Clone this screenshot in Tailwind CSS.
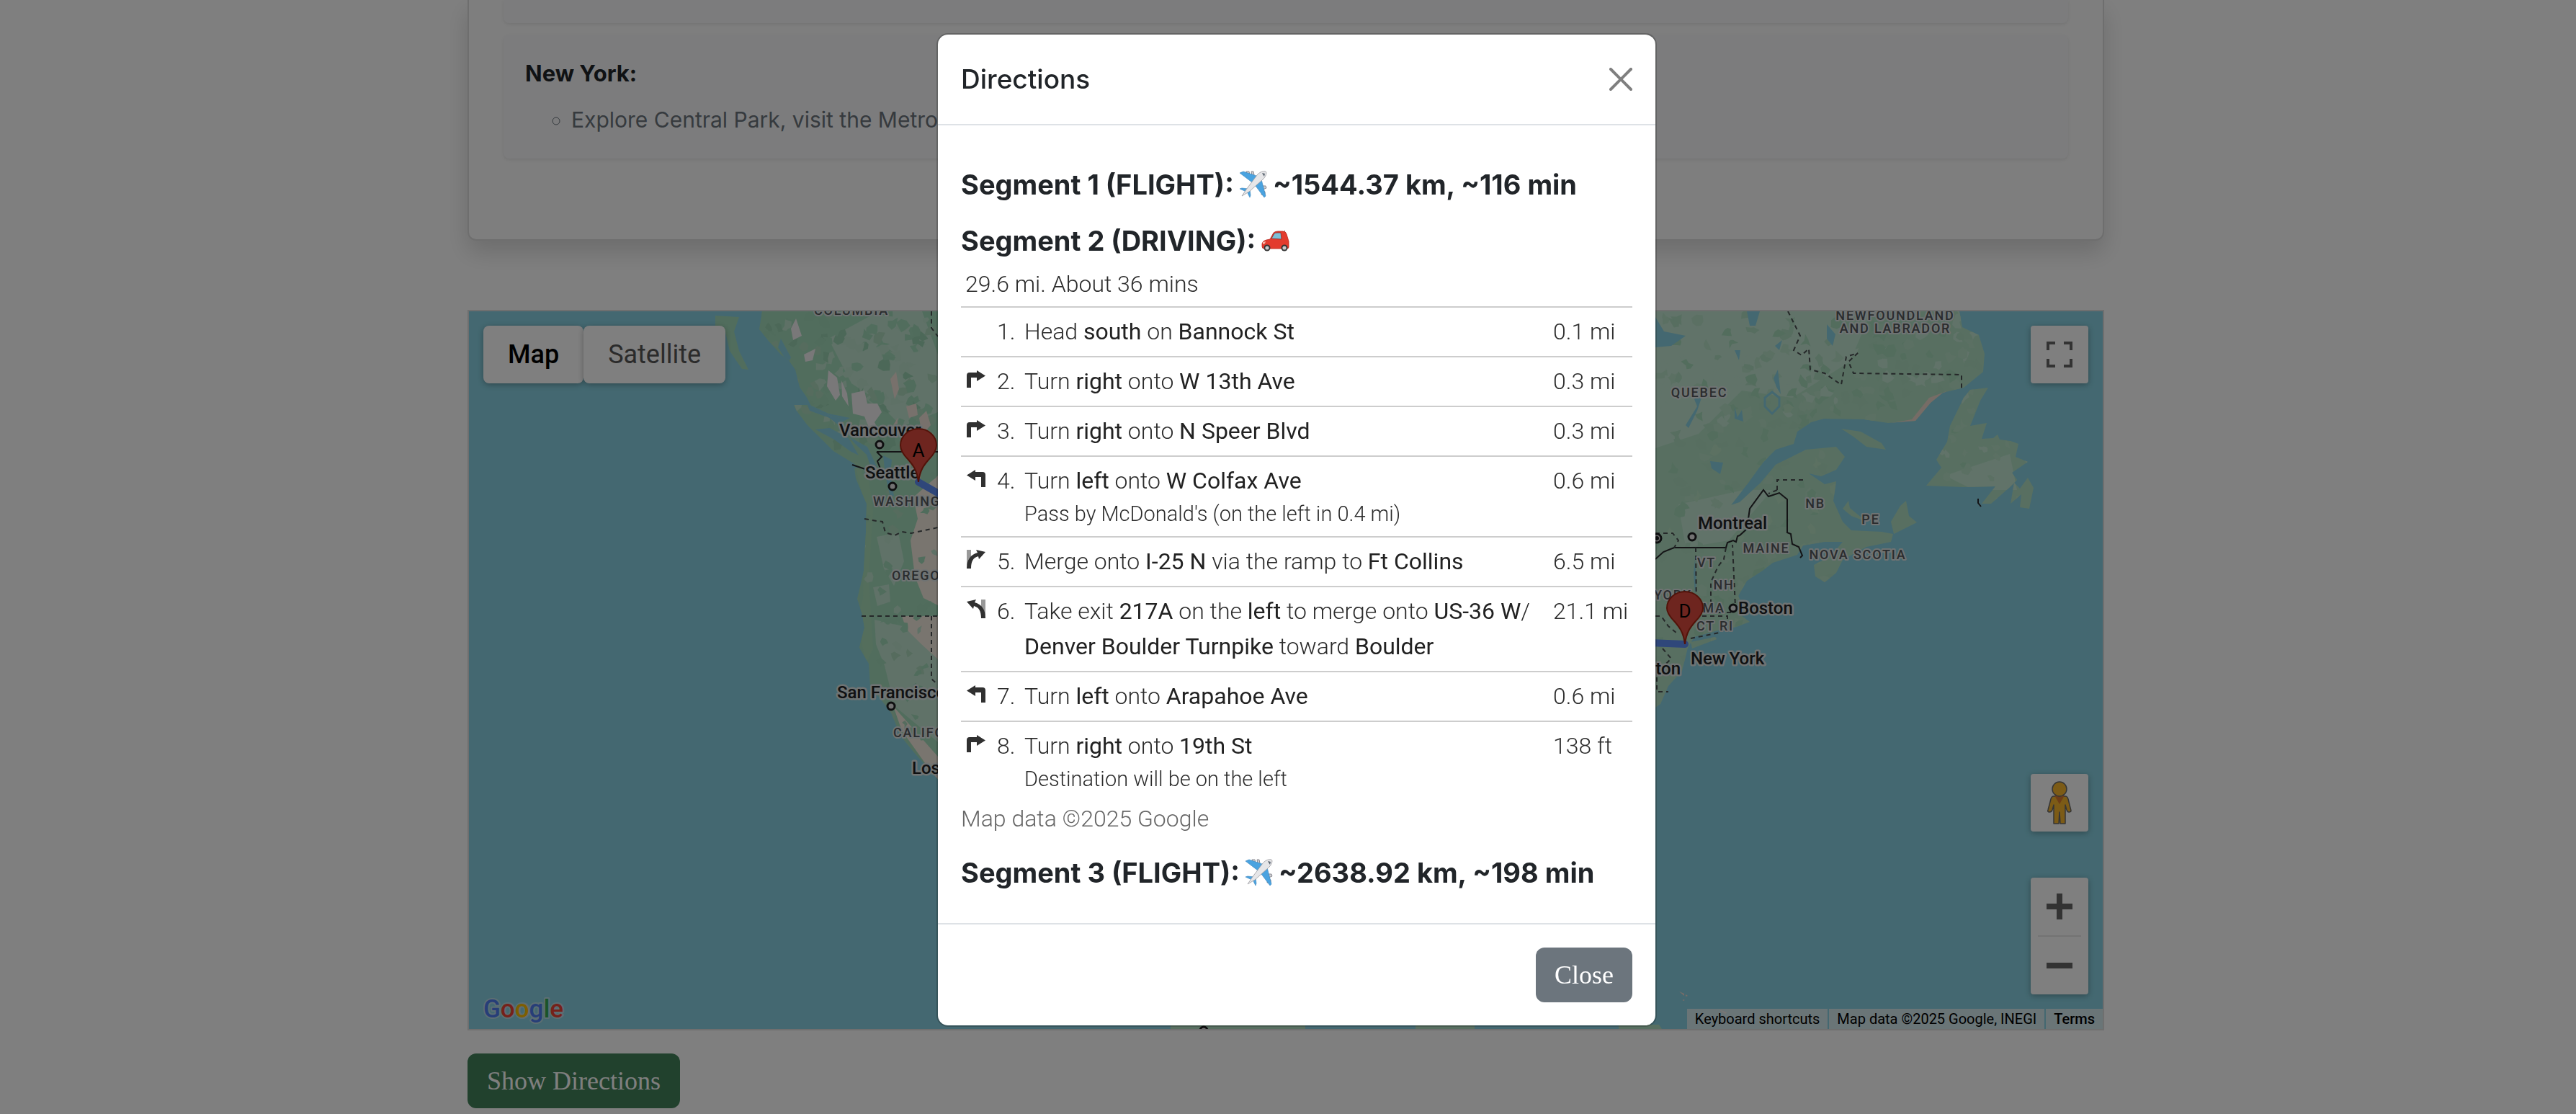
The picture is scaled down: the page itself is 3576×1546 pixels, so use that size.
<!DOCTYPE html>
<html lang="en">
<head>
  <meta charset="UTF-8" />
  <meta name="viewport" content="width=device-width, initial-scale=1.0" />
  <title>Trip Planner - Directions</title>
  <script src="https://cdn.jsdelivr.net/npm/@tailwindcss/browser@4"></script>
</head>
<body class="bg-white h-screen overflow-hidden font-['Inter',sans-serif] text-[#212529]">

  <!-- shared symbols -->
  <svg class="hidden" aria-hidden="true">
    <symbol id="turn-right" viewBox="0 0 26 24">
      <path fill="#303030" d="M0 24V7q0-4 4-4h10V0l12 7.5L14 15v-5H6v14z" />
    </symbol>
    <symbol id="turn-left" viewBox="0 0 26 24">
      <path fill="#303030" d="M26 24V7q0-4-4-4H12V0L0 7.5 12 15v-5h8v14z" />
    </symbol>
    <symbol id="merge-right" viewBox="0 0 26 26">
      <path fill="#999" d="M0 0h6v14l-6 8z" />
      <path fill="#303030" d="M0 26C0 14 5 7 15 4L13 0l13 3-9 10-1-4C9 11 6 16 6 26z" />
    </symbol>
    <symbol id="exit-left" viewBox="0 0 26 26">
      <path fill="#999" d="M26 0h-6v14l6 8z" />
      <path fill="#303030" d="M26 26C26 14 21 7 11 4l2-4L0 3l9 10 1-4c7 2 10 7 10 17z" />
    </symbol>
    <symbol id="plane" viewBox="0 0 38 38">
      <path fill="#cfcfd3" stroke="#8a8a90" d="M9 1l4 0 1 5-4 1zM16 1l3 0 1 5-3 1zM32 21l4 0 1 3-5 2zM31 28l4 1 0 4-5 0z" />
      <path fill="#4aa3e0" stroke="#3a83bb" stroke-width=".6" d="M0 3l5-2 21 7-9 8zM36 35l-2 2-12-16 8-9z" />
      <path fill="#4aa3e0" stroke="#3a83bb" stroke-width=".6" d="M0 25l3-1 9 1-3 4zM14 37l1-3-1-8-4 3z" />
      <path fill="#e6e6e8" stroke="#9a9aa0" stroke-width=".8" d="M3 35l6-9L24 6C28 1 34 0 36 1s1 7-5 12L13 29z" />
      <path fill="#5b6570" d="M31 3l4 1-1 4-2-3z" />
    </symbol>
    <symbol id="car" viewBox="0 0 39 30">
      <path stroke="#555" stroke-width="1" d="M31 3l2-2" />
      <path fill="#e33b2e" stroke="#b8251b" stroke-width=".8" d="M1 19q1-4 6-5l5-1 5-9q2-2 6-2h7q4 0 5 4l3 10v8q0 2-3 2H4q-3 0-3-3z" />
      <path fill="#7cc0d8" stroke="#8e2a22" stroke-width=".8" d="M14 12l4-7q1-1 4-1h5l1 9z" />
      <path fill="#f6b9a8" d="M2 17l4-1-1 3-3 1z" />
      <circle cx="8" cy="25" r="4.5" fill="#333" /><circle cx="8" cy="25" r="2.6" fill="#c9c9cc" />
      <circle cx="32" cy="25" r="4.5" fill="#333" /><circle cx="32" cy="25" r="2.6" fill="#c9c9cc" />
    </symbol>
  </svg>

  <div class="pr-[6px]">
    <main class="mx-auto max-w-[2272px]">

      <!-- itinerary -->
      <section class="border-2 border-t-0 border-[#dcdcdc] rounded-b-xl bg-[#fcfcfc] px-12 pb-28 shadow-[0_16px_32px_rgba(0,0,0,0.15)]">
        <ul class="flex flex-col gap-4">
          <li class="h-8 bg-[#f8f9fb] rounded-b-lg shadow-[0_2px_4px_rgba(0,0,0,0.08)]"></li>
          <li class="bg-[#f8f9fb] rounded-lg px-[30px] py-[30px] shadow-[0_2px_4px_rgba(0,0,0,0.08)]">
            <strong class="block text-[31px] leading-[48px]">New York:</strong>
            <ul class="list-[circle] mt-4 pl-16 text-[30px] leading-[48px] text-[#6c757d]">
              <li>Explore Central Park, visit the Metropolitan Museum of Art.</li>
            </ul>
          </li>
        </ul>
      </section>

      <!-- map -->
      <section class="relative mt-24 h-[1000px] border-2 border-[#dedede] bg-[#88d1e2] overflow-hidden font-['Roboto',sans-serif]">
        <svg class="block w-full h-full" viewBox="651 432 2268 996" preserveAspectRatio="xMidYMid slice" role="img" aria-label="Route map">
          <defs>
            <clipPath id="west">
              <path d="M1058 432l-4 25 13 16 17 19 11 8 9 13 6 24 9 13 7 13 26 14 15 3 13 27 24 13 13 27-3 13-15-11-13 0 2 15 9 21 6 14-1 40-3 53-4 18-5 21 7 22 3 18-7 28 13 22 2 32 15 18 14 18 13 32 17 21 40 45V432z" />
              <path d="M1102 562l18 0 23 12 24 18 18 22 18 17 5 15-8 7-20-13-23-14-20-20-17-17-15-20z" />
              <path d="M993 438l33 2-7 20 7 27 13 26-9-1-17-25-7-30-13-5z" />
            </clipPath>
            <clipPath id="east">
              <path d="M2298 432H2720l4 22 23 11 8 26-2 25-27 22-29 7-17 14-21 25-38 3-34-5-55-1-18 5-19 13-5 17-25 8-17 17-21 29-24 31 12-4 29-27 21-25 42-21 42-4 12 14-12 18-21 9-17-4 22 15 16-4-4 27 13 29 12 12 42 2 16 3-3 11-34 7-33 18-9 18-16 13-13-8-2-16 23-12 17-20-25 0-30 5-8 13-34 11-13 10-23 15-12 21 6 14-2 13 12 9-19 7-25 5-33 9-9 15-8 32-19 21-11 25-7 5z" />
              <path d="M2347 891l34-7 2 3-34 13z" />
              <path d="M2556 595l27 4 29 16 6 9-27-4-18-14z" />
              <path d="M2735 541l25-3-11 18-14 35 23-4-7 22 16-1 6-5 3 7 15 2 11 4-4 18 17 7-22 15 7 10-11 11-25 22-13 0 19-24-44 1-52-2 21-25-7-11 15-25 4-22 19-39z" />
              <path d="M2796 670l8 8 11-15 8 14-6 29-13-2 2-18-15 13z" />
              <path d="M2558 706l8-11 2 10 23 19-21-8z" />
              <path d="M2646 695l4 21 11 9-32 16-4-17 13-22z" />
            </clipPath>
          </defs>

          <g clip-path="url(#west)">
            <rect x="980" y="432" width="330" height="700" fill="#a3dbbb" />
            <path fill="#c0e4d0" d="M1150 470l70-38h60l22 60v80l-50 20-40-40-30-20zM1217 745l30-6 8 40-14 34-14-24zM1212 815l22-4 2 24-18 6zM1214 860l88 20v150l-60-50-14-56-12-30z" />
            <path fill="#f2eade" d="M1268 690l34-30v180l-20-10-12-30-6-50 10-30zM1252 855l50 0v60l-24-22-20-20zM1240 980l62 70v34l-50-70z" />
            <path fill="#a8dcb8" d="M1186 640l14 60-2 130-8 30 12 60 10-20-6-100 6-90-8-60z" />
            <g id="west-patches"></g>
            <path fill="#f3f0f2" d="M1105 442l8 24-12 6-3-16zM1116 492l16-8-4 16-10 2zM1150 514l12 10 4 24-6 8-12-20zM1168 528l8 18 2 18-9-14zM1182 546l18-4 4 18 14 0 6 12-10 14 8 16-14-4-8-20-16-4z" />
            <path fill="#f0e2d8" d="M1236 526l8-10 4 24-6 14zM1258 564l14-4 2 16-12 4zM1276 580l10-10 6 20-12 14zM1246 580l-6 10 6-2z" />
            <path fill="#88d1e2" d="M1132 596l20-2 26 14 14 24-12-6-22-16zM1084 470l14 26-4 8-14-22zM1226 632l12 6-2 20 5 30-5 2-7-30zM1120 560l30 14 30 6-12 6-44-16z" />
          </g>

          <g clip-path="url(#east)">
            <rect x="2290" y="432" width="560" height="560" fill="#b0dfc2" />
            <path fill="#c2e6d2" d="M2298 432h300l-30 70-80 50-70-10-60 60-60 20zM2700 660l90-30 10 50-60 0zM2330 700l90-20 40 0-60 70-60 10z" />
            <g id="east-patches"></g>
            <path fill="#ecd8cc" d="M2702 543l-18 15-24 28-40 2 34-6 24-30z" />
            <path fill="#88d1e2" d="M2298 440l12 20 30 6-20 14-22 2zM2425 432h18l-6 20-8 0zM2340 590l16-26-4-10 14-14-10 30-12 24zM2408 565l4 14 6-10 2 16-12-4zM2374 640l18 2-4 16-12-8zM2462 525l6-12 4 34-6-10zM2536 450l12 14-4 16-8-10zM2464 480l10-8-4 14zM2408 486h8l-2 14zM2353 775l2 34-2 16-2-30z" />
            <path fill="none" stroke="#88d1e2" stroke-width="3" d="M2450 552l10-8 10 8 0 12-10 10-10-10z" />
          </g>

          <!-- southern edge -->
          <path fill="#b0dfc2" d="M1625 1422h187v6h-187zM1965 1422h82v6h-82zM2247 1422h56l4 6h-60z" />
          <path fill="#f0d9cf" d="M2331 1376l7 3 0 3zM2340 1380l3 2-3 1zM2336 1387l3 1-3 1zM2386 1401l11 4-2 2z" />

          <!-- borders -->
          <g fill="none" stroke="#28282c" stroke-width="2">
            <path d="M1217 627H1310M1217 627l7 7-6 6 4 10M1183 645l18 6" />
            <path d="M2298 776l11-10 15-6h72l2-7 8-3 4 2 2-8 3-1 10-9 4-28 19-26 7 9 15-5 11 9v46l5 2 2 14 9 4 5 12-3 3M2746 692v6l4 5" />
            <g stroke="#4a5052" stroke-dasharray="6 5">
              <path d="M1200 720l17 3 8 1 4 15 13 4 10-5 13 2 37-8M1196 855h110M1293 855v87l9 8M1293 432v23l9 12" />
              <path d="M2482 432l17 34-9 20 11 7 10-9 2 29 20 5 23 16 7-39 16-5-13 12 7 16 150 2v22M2354 760l1 90h50l4-8-4-86M2396 760l-3 16-8 10-10 22v42M2298 855h8l10 14 12 10M2330 855h68l0 12M2347 886l40-8M2467 680v-14h40M2467 680l-12 5M2298 740l24 0 8 10-6 10" />
              <path d="M2300 940v20h16M2308 900l12 14-14 14" />
            </g>
          </g>

          <!-- cities -->
          <g fill="#e6e6e6" stroke="#1d1f20" stroke-width="3">
            <circle cx="1221" cy="617" r="5" /><circle cx="1239" cy="675" r="5" /><circle cx="1237" cy="980" r="5" />
            <circle cx="2349" cy="745" r="5" /><circle cx="2406" cy="844" r="5" /><circle cx="2300" cy="747" r="6" />
            <circle cx="1671" cy="1430" r="5" />
          </g>
          <circle cx="2300" cy="747" r="3" fill="#1d1f20" />

          <g class="[paint-order:stroke] text-[24px] font-medium" fill="#202224" stroke="#dfe6e6" stroke-width="5" stroke-linejoin="round">
            <text x="1165" y="605">Vancouver</text>
            <text x="1201" y="664">Seattle</text>
            <text x="1162" y="969">San Francisco</text>
            <text x="1266" y="1074">Los Angeles</text>
            <text x="2357" y="734">Montreal</text>
            <text x="2413" y="852">Boston</text>
            <text x="2347" y="922">New York</text>
            <text x="2333" y="936" text-anchor="end">Washington</text>
          </g>
          <g class="[paint-order:stroke] text-[18px] font-medium tracking-widest" fill="#54595c" stroke="#dfe6e6" stroke-width="4" stroke-linejoin="round">
            <text x="1130" y="437">COLUMBIA</text>
            <text x="1212" y="702">WASHINGTON</text>
            <text x="1238" y="805">OREGON</text>
            <text x="1240" y="1023">CALIFORNIA</text>
            <text x="2631" y="444" text-anchor="middle">NEWFOUNDLAND</text>
            <text x="2631" y="462" text-anchor="middle">AND LABRADOR</text>
            <text x="2359" y="551" text-anchor="middle">QUEBEC</text>
            <text x="2520" y="705" text-anchor="middle">NB</text>
            <text x="2597" y="727" text-anchor="middle">PE</text>
            <text x="2452" y="767" text-anchor="middle">MAINE</text>
            <text x="2579" y="776" text-anchor="middle">NOVA SCOTIA</text>
            <text x="2369" y="787" text-anchor="middle">VT</text>
            <text x="2393" y="818" text-anchor="middle">NH</text>
            <text x="2379" y="850" text-anchor="middle">MA</text>
            <text x="2381" y="875" text-anchor="middle">CT RI</text>
            <text x="2349" y="832" text-anchor="end">NEW YORK</text>
          </g>

          <!-- route and pins -->
          <path fill="none" stroke="#5f8ef5" stroke-width="10" stroke-linecap="round" d="M1275 669l60 34M2290 892l49 2" />
          <g id="pins" class="text-[26px]" text-anchor="middle">
            <g>
              <path fill="#dd4b3e" stroke="#a52714" stroke-width="2" d="M1275 669c-2-17-8-24-14-31-6-6-11-13-11-20a25 23 0 0 1 50 0c0 7-5 14-11 20-6 7-12 14-14 31z" />
              <text x="1275" y="634">A</text>
            </g>
            <g>
              <path fill="#dd4b3e" stroke="#a52714" stroke-width="2" d="M2339 894c-2-17-8-24-14-31-6-6-11-12-11-19a25 23 0 0 1 50 0c0 7-5 13-11 19-6 7-12 14-14 31z" />
              <text x="2339" y="857">D</text>
            </g>
          </g>
        </svg>

        <div class="absolute top-5 left-5 flex h-20 text-[36px]">
          <button class="bg-white rounded-lg px-[34px] font-medium text-black shadow-[0_2px_8px_rgba(0,0,0,0.3)]">Map</button>
          <button class="bg-white rounded-lg px-[34px] text-[#565656] shadow-[0_2px_8px_rgba(0,0,0,0.3)]">Satellite</button>
        </div>

        <button class="absolute top-5 right-5 size-20 flex items-center justify-center bg-white rounded shadow-[0_2px_8px_rgba(0,0,0,0.3)]" aria-label="Toggle fullscreen view">
          <svg class="size-9" viewBox="0 0 18 18" fill="#666"><path d="M0 0v6h2V2h4V0zM12 0v2h4v4h2V0zM16 16h-4v2h6v-6h-2zM2 12H0v6h6v-2H2z" /></svg>
        </button>

        <div class="absolute bottom-12 right-5 flex flex-col gap-16">
          <button class="size-20 flex items-center justify-center bg-white rounded shadow-[0_2px_8px_rgba(0,0,0,0.3)]" aria-label="Street View Pegman">
            <svg class="w-[34px] h-[60px]" viewBox="0 0 34 60" stroke="#6b6b6b" stroke-width="1.5" stroke-linejoin="round">
              <path fill="#f9b62d" d="M9 21h16q3 0 4 4l4 16q0 2-3 2-2 0-3-3l-2-7v26h-7l-1-16-1 16H9V33l-2 7q-1 3-4 3-3 0-2-3l4-15q1-4 4-4z" />
              <path fill="#dc7a2e" stroke="none" d="M10 20h14l-7 12z" />
              <circle cx="17" cy="11" r="10" fill="#f9b62d" />
            </svg>
          </button>
          <div class="flex flex-col items-center bg-white rounded shadow-[0_2px_8px_rgba(0,0,0,0.3)]">
            <button class="size-20 flex items-center justify-center" aria-label="Zoom in">
              <svg class="size-9" viewBox="0 0 18 18" fill="#666"><path d="M18 7h-7V0H7v7H0v4h7v7h4v-7h7z" /></svg>
            </button>
            <div class="w-[60px] h-[2px] bg-[#e6e6e6]"></div>
            <button class="size-20 flex items-center justify-center" aria-label="Zoom out">
              <svg class="size-9" viewBox="0 0 18 18" fill="#666"><path d="M0 7h18v4H0z" /></svg>
            </button>
          </div>
        </div>

        <a href="#" class="absolute bottom-0 left-5" aria-label="Google Maps">
          <svg class="w-[132px] h-[52px] [paint-order:stroke] text-[35px] font-medium" viewBox="0 0 132 52" stroke="#b9dde6" stroke-width="4" stroke-linejoin="round">
            <text x="0" y="36"><tspan fill="#4e7df0">G</tspan><tspan fill="#ea4335">o</tspan><tspan fill="#fbbc05">o</tspan><tspan fill="#4e7df0">g</tspan><tspan fill="#34a853">l</tspan><tspan fill="#ea4335">e</tspan></text>
          </svg>
        </a>

        <div class="absolute bottom-0 right-0 flex gap-[2px] h-7 text-[20px] leading-7 text-black">
          <button class="px-[11px] bg-[#f5f5f5]/70">Keyboard shortcuts</button>
          <span class="px-[11px] bg-[#f5f5f5]/70">Map data ©2025 Google, INEGI</span>
          <a href="#" class="px-[11px] bg-[#f5f5f5]/70 font-medium">Terms</a>
        </div>
      </section>

      <button class="mt-8 h-[76px] px-[27px] rounded-xl bg-[#42825a] text-white font-['Liberation_Serif',serif] text-[36px]">Show Directions</button>
    </main>
  </div>

  <!-- backdrop and modal -->
  <div class="fixed inset-0 bg-black/50"></div>
  <div class="fixed inset-0 pl-6 flex justify-center items-start">
    <div role="dialog" aria-labelledby="modalTitle" class="mt-[46px] w-full max-w-[1000px] bg-white bg-clip-padding border-2 border-black/20 rounded-2xl">

      <div class="flex items-center justify-between h-[126px] px-8 border-b-2 border-[#dee2e6]">
        <h5 id="modalTitle" class="text-[37px] leading-[56px] font-medium">Directions</h5>
        <button aria-label="Close">
          <svg class="size-8" viewBox="0 0 16 16" fill="#7f7f7f"><path d="M.293.293a1 1 0 0 1 1.414 0L8 6.586 14.293.293a1 1 0 1 1 1.414 1.414L9.414 8l6.293 6.293a1 1 0 0 1-1.414 1.414L8 9.414l-6.293 6.293a1 1 0 0 1-1.414-1.414L6.586 8 .293 1.707a1 1 0 0 1 0-1.414z" /></svg>
        </button>
      </div>

      <div class="px-8 pt-[58px] pb-[46px]">
        <h5 class="flex items-center gap-2 text-[38px] leading-[48px] font-bold">
          Segment 1 (FLIGHT):
          <svg class="size-[38px]"><use href="#plane" /></svg>
          ~1544.37 km, ~116 min
        </h5>

        <h5 class="flex items-center gap-2 mt-[30px] text-[38px] leading-[48px] font-bold">
          Segment 2 (DRIVING):
          <svg class="w-[39px] h-[30px]"><use href="#car" /></svg>
        </h5>

        <div class="mt-3 font-['Roboto',sans-serif] font-light text-[32px] leading-[49px] text-[#2c2c2c]">
          <p class="pl-[6px] mb-[6px]">29.6 mi. About 36 mins</p>
          <table class="w-full table-fixed border-collapse [&_b]:font-normal [&_b]:text-[#222] [&_tr]:border-t-2 [&_tr]:border-[#cdcdcd] [&_td]:align-top [&_td]:py-[9px] [&_svg]:w-[26px] [&_svg]:h-[26px] [&_svg]:ml-2 [&_svg]:mt-2">
            <colgroup><col class="w-[50px]" /><col class="w-[38px]" /><col /><col class="w-[110px]" /></colgroup>
            <tbody>
              <tr><td></td><td>1.</td><td>Head <b>south</b> on <b>Bannock St</b></td><td>0.1 mi</td></tr>
              <tr><td><svg><use href="#turn-right" /></svg></td><td>2.</td><td>Turn <b>right</b> onto <b>W 13th Ave</b></td><td>0.3 mi</td></tr>
              <tr><td><svg><use href="#turn-right" /></svg></td><td>3.</td><td>Turn <b>right</b> onto <b>N Speer Blvd</b></td><td>0.3 mi</td></tr>
              <tr><td><svg><use href="#turn-left" /></svg></td><td>4.</td><td>Turn <b>left</b> onto <b>W Colfax Ave</b><div class="text-[29px] leading-[43px]">Pass by McDonald's (on the left in 0.4 mi)</div></td><td>0.6 mi</td></tr>
              <tr><td><svg><use href="#merge-right" /></svg></td><td>5.</td><td>Merge onto <b>I-25 N</b> via the ramp to <b>Ft Collins</b></td><td>6.5 mi</td></tr>
              <tr><td><svg><use href="#exit-left" /></svg></td><td>6.</td><td>Take exit <b>217A</b> on the <b>left</b> to merge onto <b>US-36 W</b>/<wbr /><b>Denver Boulder Turnpike</b> toward <b>Boulder</b></td><td>21.1 mi</td></tr>
              <tr><td><svg><use href="#turn-left" /></svg></td><td>7.</td><td>Turn <b>left</b> onto <b>Arapahoe Ave</b></td><td>0.6 mi</td></tr>
              <tr><td><svg><use href="#turn-right" /></svg></td><td>8.</td><td>Turn <b>right</b> onto <b>19th St</b><div class="text-[29px] leading-[43px]">Destination will be on the left</div></td><td>138 ft</td></tr>
            </tbody>
          </table>
          <p class="text-[#666]">Map data ©2025 Google</p>
        </div>

        <h5 class="flex items-center gap-2 mt-[26px] text-[38px] leading-[48px] font-bold">
          Segment 3 (FLIGHT):
          <svg class="size-[38px]"><use href="#plane" /></svg>
          ~2638.92 km, ~198 min
        </h5>
      </div>

      <div class="flex justify-end p-8 border-t-2 border-[#dee2e6]">
        <button class="h-[76px] px-[26px] rounded-xl bg-[#6c757d] text-white font-['Liberation_Serif',serif] text-[36px]">Close</button>
      </div>
    </div>
  </div>

  <script>
    // vegetation patches, seeded so the terrain is always the same
    let seed = 7;
    function rand() {
      seed = (seed * 16807) % 2147483647;
      return seed / 2147483647;
    }

    function scatter(id, x, y, w, h, count, size, colors) {
      const group = document.getElementById(id);
      for (let i = 0; i < count; i++) {
        const cx = x + rand() * w;
        const cy = y + rand() * h;
        const points = [];
        for (let k = 0; k < 7; k++) {
          const a = k / 7 * Math.PI * 2;
          const r = size * (0.25 + rand());
          points.push((cx + Math.cos(a) * r).toFixed(1) + ',' + (cy + Math.sin(a) * r).toFixed(1));
        }
        const poly = document.createElementNS('http://www.w3.org/2000/svg', 'polygon');
        poly.setAttribute('points', points.join(' '));
        poly.setAttribute('fill', colors[Math.floor(rand() * colors.length)]);
        group.appendChild(poly);
      }
    }

    scatter('west-patches', 1060, 432, 240, 190, 150, 9, ['#98d0b0', '#a0d8b8', '#bce2cc', '#acd8bc', '#a3dbbb']);
    scatter('west-patches', 1190, 620, 110, 440, 60, 7, ['#a3dbbb', '#bce2cc', '#acd8bc', '#a0d8b8']);
    scatter('east-patches', 2298, 432, 460, 160, 170, 9, ['#a6dabb', '#b6e0c6', '#c2e6d2', '#aedcc0']);
    scatter('east-patches', 2298, 560, 260, 360, 130, 9, ['#a6dabb', '#b6e0c6', '#aedcc0', '#b8e2c4']);
    scatter('east-patches', 2680, 560, 140, 140, 40, 6, ['#a6dabb', '#b6e0c6', '#c2e6d2']);
  </script>
</body>
</html>
